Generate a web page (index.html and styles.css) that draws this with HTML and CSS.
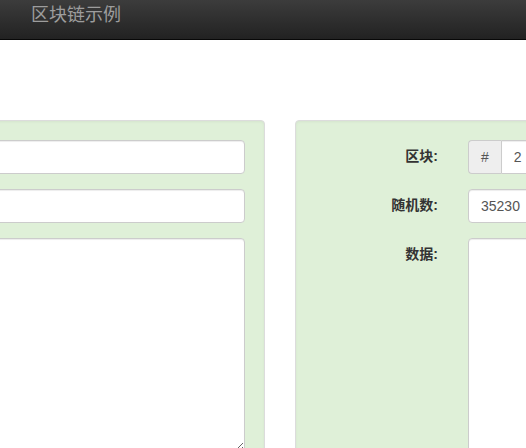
FILE: index.html
```html
<!DOCTYPE html>
<html lang="zh">
<head>
<meta charset="utf-8">
<title>区块链示例</title>
<link rel="stylesheet" href="styles.css">
</head>
<body>
<nav class="navbar">
  <span class="brand">区块链示例</span>
</nav>
<main class="main">
  <div class="row">
    <div class="well">
      <form class="form">
        <div class="form-group">
          <span class="label"></span>
          <div class="control"><input class="form-control" type="text"></div>
        </div>
        <div class="form-group">
          <span class="label"></span>
          <div class="control"><input class="form-control" type="text"></div>
        </div>
        <div class="form-group">
          <span class="label"></span>
          <div class="control"><textarea class="form-control textarea"></textarea></div>
        </div>
      </form>
    </div>
    <div class="well">
      <form class="form">
        <div class="form-group">
          <label class="label">区块:</label>
          <div class="control">
            <div class="input-group">
              <span class="addon">#</span>
              <input class="form-control grouped" type="text" value="2">
            </div>
          </div>
        </div>
        <div class="form-group">
          <label class="label">随机数:</label>
          <div class="control"><input class="form-control" type="text" value="35230"></div>
        </div>
        <div class="form-group">
          <label class="label">数据:</label>
          <div class="control"><textarea class="form-control textarea"></textarea></div>
        </div>
      </form>
    </div>
  </div>
</main>
</body>
</html>
```
FILE: styles.css
```css
html, body {
  overflow: hidden;
}
body {
  margin: 0;
  height: 448px;
  font-family: "Helvetica Neue", Helvetica, Arial, "Liberation Sans", "Noto Sans CJK SC", sans-serif;
  font-size: 14px;
  line-height: 1.42857;
  color: #333;
  background: #fff;
}
.navbar {
  height: 40px;
  box-sizing: border-box;
  padding: 5px 0 0 31px;
  background: linear-gradient(to bottom, #3c3c3c 0, #222 100%);
  border-bottom: 1px solid #080808;
}
.brand {
  display: block;
  color: #9d9d9d;
  font-size: 18px;
  line-height: 20px;
}
.main {
  padding-top: 80px;
}
.row {
  display: flex;
  gap: 30px;
  margin-left: -664px;
}
.well {
  flex: none;
  width: 929px;
  box-sizing: border-box;
  padding: 19px;
  min-height: 400px;
  background: #dff0d8;
  border: 1px solid #dcdcdc;
  border-radius: 4px;
  box-shadow: inset 0 1px 3px rgba(0, 0, 0, .05);
}
.form {
  margin: 0;
}
.form-group {
  display: grid;
  grid-template-columns: 123px 1fr;
  column-gap: 30px;
  margin-bottom: 15px;
}
.label {
  font-weight: bold;
  text-align: right;
  padding-top: 7px;
}
.form-control {
  display: block;
  width: 100%;
  height: 34px;
  box-sizing: border-box;
  padding: 6px 12px;
  margin: 0;
  font-family: "Liberation Sans Narrow", "Liberation Sans", "Noto Sans CJK SC", sans-serif;
  font-size: 14px;
  line-height: 1.42857;
  color: #555;
  background: #fff;
  border: 1px solid #ccc;
  border-radius: 4px;
  box-shadow: inset 0 1px 1px rgba(0, 0, 0, .075);
}
.textarea {
  height: 214px;
}
.input-group {
  display: flex;
}
.addon {
  flex: none;
  padding: 6px 12px;
  font-size: 14px;
  line-height: 20px;
  color: #555;
  text-align: center;
  background: #eee;
  border: 1px solid #ccc;
  border-right: 0;
  border-radius: 4px 0 0 4px;
}
.grouped {
  flex: 1;
  border-radius: 0 4px 4px 0;
}
```
